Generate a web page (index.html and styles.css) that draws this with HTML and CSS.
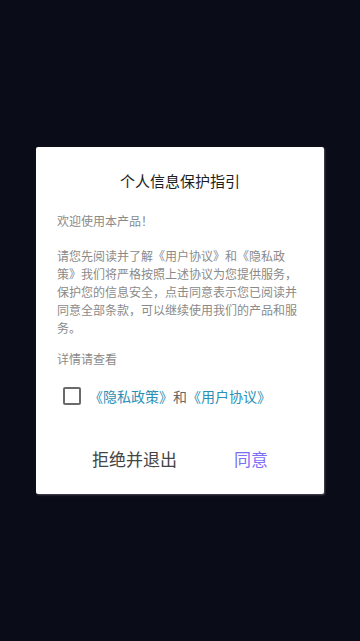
FILE: index.html
```html
<!DOCTYPE html>
<html lang="zh-CN">
<head>
<meta charset="utf-8">
<meta name="viewport" content="width=device-width, initial-scale=1">
<title>个人信息保护指引</title>
<link rel="stylesheet" href="styles.css">
</head>
<body>
<div class="overlay">
  <div class="dialog">
    <h1 class="title">个人信息保护指引</h1>
    <div class="content">
      <p class="welcome">欢迎使用本产品！</p>
      <p class="para">请您先阅读并了解《用户协议》和《隐私政策》我们将严格按照上述协议为您提供服务，保护您的信息安全，点击同意表示您已阅读并同意全部条款，可以继续使用我们的产品和服务。</p>
      <p class="detail">详情请查看</p>
      <label class="agree">
        <span class="checkbox"></span>
        <span class="agree-text"><span class="link">《隐私政策》</span>和<span class="link">《用户协议》</span></span>
      </label>
    </div>
    <div class="actions">
      <span class="btn btn-reject">拒绝并退出</span>
      <span class="btn btn-accept">同意</span>
    </div>
  </div>
</div>
</body>
</html>
```

FILE: styles.css
```css
* { box-sizing: border-box; }
html, body {
  margin: 0;
  padding: 0;
  height: 100%;
}
body {
  background: #0a0c17;
  font-family: "Noto Sans CJK SC", "Noto Sans", sans-serif;
}
.overlay {
  height: 641px;
  display: flex;
  align-items: center;
  justify-content: center;
}
.dialog {
  width: 288px;
  background: #ffffff;
  border-radius: 2px;
  padding: 24px 0 11px;
  box-shadow: 1px 1px 2px rgba(200, 200, 210, 0.35);
}
.title {
  margin: 0;
  font-size: 15px;
  font-weight: 400;
  line-height: 20px;
  color: #1e1e1e;
  text-align: center;
}
.content {
  padding: 21px 21px 0;
  color: #8a8a8a;
  font-size: 12px;
  line-height: 18px;
}
.content p { margin: 0; }
.para { margin-top: 17px !important; }
.detail { margin-top: 12.5px !important; }
.agree {
  display: flex;
  align-items: center;
  gap: 8px;
  margin: 18.5px 0 0 6px;
  height: 20px;
}
.checkbox {
  width: 18px;
  height: 18px;
  border: 2px solid #6a6a6a;
  border-radius: 2px;
  flex: none;
}
.agree-text {
  font-size: 14px;
  line-height: 20px;
  color: #666666;
}
.link { color: #2b8fb6; }
.actions {
  display: flex;
  justify-content: space-between;
  align-items: center;
  height: 48px;
  margin-top: 29px;
  padding: 0 56px;
}
.btn {
  font-size: 17px;
  line-height: 24px;
}
.btn-reject { color: #444444; }
.btn-accept { color: #7a70f4; }
```
